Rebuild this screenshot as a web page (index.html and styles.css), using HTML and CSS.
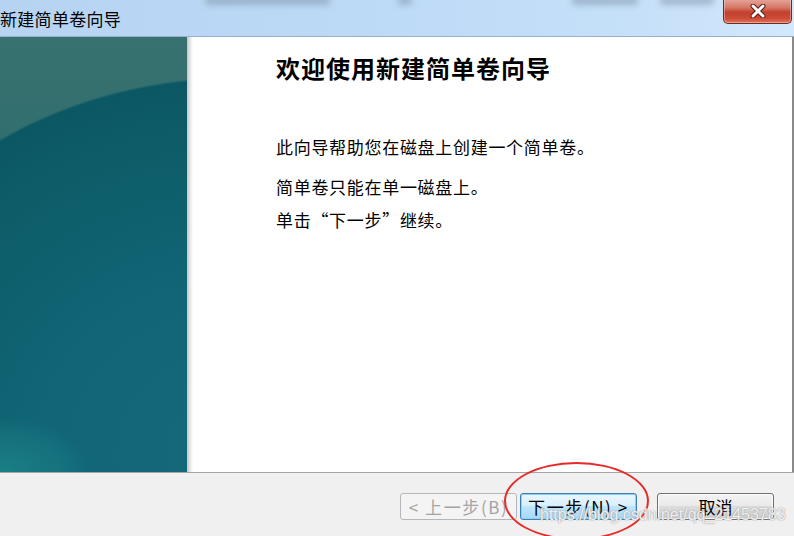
FILE: index.html
```html
<!DOCTYPE html>
<html>
<head>
    <title>新建简单卷向导</title>
    <link rel="stylesheet" href="styles.css">
</head>
<body>
    <div class="window">
        <div class="titlebar">
            <span class="blur-text b1"></span>
            <span class="blur-text b2"></span>
            <span class="blur-text b3"></span>
            <span class="blur-text b4"></span>
            <span class="title">新建简单卷向导</span>
            <button class="close-btn" type="button" aria-label="关闭">
                <svg width="22" height="14" viewBox="0 0 22 14">
                    <path d="M6 2 L16 12 M16 2 L6 12" stroke="#5a1a14" stroke-width="5" stroke-linecap="round"/>
                    <path d="M6 2 L16 12 M16 2 L6 12" stroke="#ffffff" stroke-width="3" stroke-linecap="round"/>
                </svg>
            </button>
        </div>
        <div class="main">
            <div class="side"></div>
            <div class="shade"></div>
            <div class="content">
                <h1>欢迎使用新建简单卷向导</h1>
                <p class="line-one">此向导帮助您在磁盘上创建一个简单卷。</p>
                <p class="line-two">简单卷只能在单一磁盘上。</p>
                <p class="line-three">单击“下一步”继续。</p>
            </div>
        </div>
        <div class="footer">
            <button class="btn btn-disabled" type="button" disabled>&lt; 上一步(B)</button>
            <button class="btn btn-default" type="button">下一步(N) &gt;</button>
            <button class="btn btn-cancel" type="button">取消</button>
        </div>
        <div class="mark-circle"></div>
        <div class="watermark">https://blog.csdn.net/qq_21453783</div>
    </div>
</body>
</html>
```

FILE: styles.css
```css
html, body { margin: 0; padding: 0; }
body { width: 794px; height: 536px; overflow: hidden; background: #f0f0f0; font-family: "Noto Sans CJK SC", "Noto Sans", sans-serif; }
.window { position: relative; width: 794px; height: 536px; display: flex; flex-direction: column; }

.titlebar { position: relative; height: 36px; flex: none; display: flex; align-items: center; border-bottom: 1px solid #98b0c8; background: linear-gradient(90deg, #b6d4f2 0%, #bcd9f6 45%, #c6e0f9 80%, #d2e8fc 100%); }
.title { font-size: 17px; line-height: 20px; color: #000; padding-top: 2px; letter-spacing: 0.3px; }
.blur-text { position: absolute; top: -4px; height: 9px; background: #7f93a8; filter: blur(3px); opacity: 0.55; border-radius: 3px; }
.b1 { left: 205px; width: 125px; }
.b2 { left: 398px; width: 14px; }
.b3 { left: 572px; width: 66px; }
.b4 { left: 660px; width: 54px; }
.close-btn { position: absolute; top: -1px; right: 2px; width: 69px; height: 25px; padding: 0; border: 1px solid #6e2a22; border-top: none; border-radius: 0 0 5px 5px; background: linear-gradient(180deg, #e4a79c 0%, #d67866 35%, #c2412f 55%, #cc4a36 80%, #e0765c 100%); box-shadow: inset 0 0 0 1px rgba(255,255,255,0.35); display: flex; align-items: center; justify-content: center; }

.main { height: 435px; flex: none; display: flex; }
.side { width: 187px; flex: none; background:
    radial-gradient(ellipse 90px 55px at 0 100%, rgba(30,140,142,0.7) 0%, rgba(30,140,142,0.3) 70%, rgba(30,140,142,0) 100%),
    radial-gradient(ellipse 430px 380px at 235px 420px, #15697b 0%, #116576 45%, #0d5c68 85%, #0b5864 99.3%, rgba(11,88,100,0) 100%),
    linear-gradient(180deg, #377270 0%, #2f6b6d 45%, #2a666b 100%); }
.shade { width: 6px; flex: none; background: linear-gradient(90deg, #c4c4c4 0%, #e6e6e6 50%, #ffffff 100%); }
.content { flex: 1; background: #fff; border-right: 2px solid #8a8a8a; padding: 16px 0 0 83px; color: #000; }
.content h1 { margin: 0; font-size: 24px; line-height: 30px; font-weight: bold; letter-spacing: 1px; }
.content p { margin: 0; font-size: 17px; line-height: 24px; letter-spacing: 0.7px; }
.line-one { margin-top: 52px !important; }
.line-two { margin-top: 16px !important; }
.line-three { margin-top: 9px !important; }

.footer { flex: 1; border-top: 1px solid #a5a5a5; background: #f0f0f0; display: flex; align-items: flex-start; justify-content: flex-end; padding: 20px 20px 0 0; }
.btn { width: 117px; height: 27px; padding: 0; font-family: "Noto Sans CJK SC", "Noto Sans", sans-serif; font-size: 17px; line-height: 25px; letter-spacing: 1.6px; border-radius: 3px; color: #000; white-space: pre; }
.btn-disabled { color: #a4a4a4; border: 1px solid #b4b8bb; background: #f4f4f4; }
.btn-default { margin-left: 3px; border: 1px solid #3c7fb1; background: linear-gradient(180deg, #eaf6fd 0%, #d9f0fc 45%, #bee6fd 50%, #a7d9f5 100%); box-shadow: inset 0 0 0 1px #8ed0f4; }
.btn-cancel { margin-left: 20px; border: 1px solid #707070; background: linear-gradient(180deg, #f2f2f2 0%, #ebebeb 45%, #dddddd 50%, #cfcfcf 100%); box-shadow: inset 0 0 0 1px #fcfcfc; letter-spacing: 0; }

.mark-circle { position: absolute; left: 504px; top: 462px; width: 141px; height: 74px; border: 2px solid #e62a2a; border-radius: 50%; }
.watermark { position: absolute; left: 540px; top: 505px; font-family: "Liberation Sans", Arial, sans-serif; font-size: 16px; line-height: 20px; color: rgba(255,255,255,0.85); text-shadow: 0 0 1px #9a9a9a, 0 0 2px #b0b0b0; }
```
